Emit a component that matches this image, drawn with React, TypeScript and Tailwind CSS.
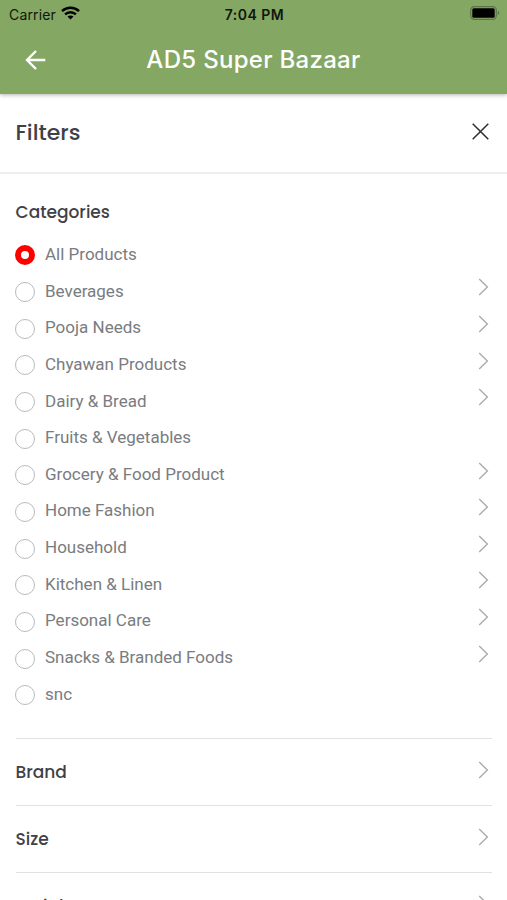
import { useState } from 'react';

const categories = [
  { name: 'All Products', hasChildren: false },
  { name: 'Beverages', hasChildren: true },
  { name: 'Pooja Needs', hasChildren: true },
  { name: 'Chyawan Products', hasChildren: true },
  { name: 'Dairy & Bread', hasChildren: true },
  { name: 'Fruits & Vegetables', hasChildren: false },
  { name: 'Grocery & Food Product', hasChildren: true },
  { name: 'Home Fashion', hasChildren: true },
  { name: 'Household', hasChildren: true },
  { name: 'Kitchen & Linen', hasChildren: true },
  { name: 'Personal Care', hasChildren: true },
  { name: 'Snacks & Branded Foods', hasChildren: true },
  { name: 'snc', hasChildren: false },
];

const sections = ['Brand', 'Size', 'Weight'];

const headingFont = "font-['Poppins','Inter',sans-serif] font-medium text-[#3f4146]";

function Chevron() {
  return (
    <svg width="11" height="18" viewBox="0 0 11 18" fill="none" className="shrink-0">
      <path d="M1.2 1L9.4 9L1.2 17" stroke="#a9abad" strokeWidth="1.4" />
    </svg>
  );
}

function StatusBar() {
  return (
    <div className="grid h-7 grid-cols-3 items-center pl-[9px] pr-[7px] font-['Inter',sans-serif] text-[#10160c]">
      <div className="flex items-center gap-[5px]">
        <span className="text-[14px] tracking-[0.15px]">Carrier</span>
        <svg width="19" height="14" viewBox="0 0 19 14" fill="none" stroke="#000" strokeWidth="2.5" className="-mt-[2px]">
          <path d="M1 5.2C5.8 .7 13.2 .7 18 5.2" />
          <path d="M4.1 8.4C7.1 5.5 11.9 5.5 14.9 8.4" />
          <path d="M9.5 13.6L6.5 10.6C8.2 9 10.8 9 12.5 10.6Z" fill="#000" stroke="none" />
        </svg>
      </div>
      <span className="text-center text-[14px] font-semibold tracking-[0.5px]">7:04 PM</span>
      <svg width="30" height="14" viewBox="0 0 30 14" className="-mt-[2px] justify-self-end">
        <rect x=".7" y=".7" width="25.6" height="12.6" rx="3.6" fill="none" stroke="#5c7547" strokeWidth="1.2" />
        <rect x="2.3" y="2.3" width="22.4" height="9.4" rx="1.5" fill="#000" />
        <path d="M27.8 4.8C29.8 5.6 29.8 8.4 27.8 9.2Z" fill="#5c7547" />
      </svg>
    </div>
  );
}

export default function App() {
  const [selected, setSelected] = useState('All Products');

  return (
    <div className="h-[900px] w-[507px] overflow-hidden bg-white">
      {/* App bar */}
      <header className="relative h-[94px] bg-[#84a763] shadow-[0_1px_4px_rgba(0,0,0,0.3)]">
        <StatusBar />
        <div className="grid h-16 grid-cols-[65px_1fr_65px] items-center">
          <button className="ml-[25px]" aria-label="Back">
            <svg width="21" height="20" viewBox="0 0 21 20" fill="none" stroke="#fff" strokeWidth="2.4">
              <path d="M20.3 10H2M11 1L2 10L11 19" />
            </svg>
          </button>
          <h1 className="text-center font-['Inter',sans-serif] text-[24px] font-medium tracking-[0.3px] text-white">
            AD5 Super Bazaar
          </h1>
        </div>
      </header>

      {/* Filters title */}
      <div className="flex h-[80px] items-center justify-between border-b-2 border-[#eeeeef] pl-[15.5px] pr-[18px]">
        <h2 className={`${headingFont} -mt-[1px] text-[22px]`}>Filters</h2>
        <button aria-label="Close" className="-mt-[4px]">
          <svg width="17" height="17" viewBox="0 0 17 17" fill="none" stroke="#2c2e31" strokeWidth="1.5">
            <path d="M.7 .7L16.3 16.3M16.3 .7L.7 16.3" />
          </svg>
        </button>
      </div>

      {/* Category list */}
      <div className="mx-[15.5px] pt-[25px]">
        <h3 className={`${headingFont} h-[37.4px] text-[17px] leading-[26px]`}>Categories</h3>
        <ul>
          {categories.map((category) => (
            <li
              key={category.name}
              className="flex h-[36.65px] items-center"
              onClick={() => setSelected(category.name)}
            >
              {selected === category.name ? (
                <span className="-ml-[0.5px] mt-[1px] size-5 rounded-full border-[6px] border-[#fd0000] bg-white" />
              ) : (
                <span className="-ml-[0.5px] mt-[1.5px] size-5 rounded-full border-[1.5px] border-[#b8babc]" />
              )}
              <span className="ml-[10px] flex-1 font-['Roboto',sans-serif] text-[17px] text-[#797c80]">
                {category.name}
              </span>
              {category.hasChildren && (
                <span className="-mt-[8px] mr-[3px]">
                  <Chevron />
                </span>
              )}
            </li>
          ))}
        </ul>
      </div>

      {/* Collapsed sections */}
      <div className="mx-[15.5px] mt-[25px]">
        {sections.map((section) => (
          <div key={section} className="flex h-[67.2px] items-center justify-between border-t border-[#dfe1e3] pr-[3px]">
            <h3 className={`${headingFont} pt-[1.5px] text-[17px]`}>{section}</h3>
            <span className="-mt-[4px]">
              <Chevron />
            </span>
          </div>
        ))}
      </div>
    </div>
  );
}
